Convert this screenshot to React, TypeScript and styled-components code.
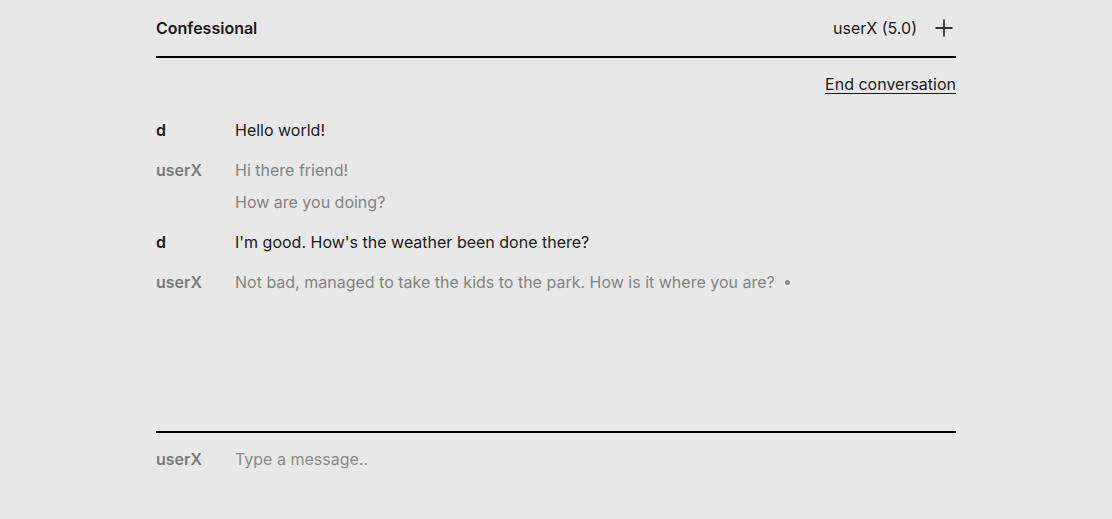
import styled, { createGlobalStyle } from "styled-components";

const GlobalStyle = createGlobalStyle`
  html, body {
    margin: 0;
    padding: 0;
    background: #e8e8e8;
    font-family: Inter, "Noto Sans", sans-serif;
    color: #1a1a1a;
  }
`;

const Page = styled.div`
  width: 800px;
  height: 100vh;
  margin: 0 auto;
  display: flex;
  flex-direction: column;
`;

const Header = styled.header`
  height: 56px;
  display: flex;
  align-items: center;
  justify-content: space-between;
  border-bottom: 2px solid #000;
  font-size: 16px;
`;

const Title = styled.div`
  font-weight: 600;
`;

const HeaderRight = styled.div`
  display: flex;
  align-items: center;
  gap: 15px;
`;

const IconButton = styled.button`
  border: 0;
  background: none;
  padding: 0;
  display: flex;
  color: #333;
  cursor: pointer;
`;

const Actions = styled.div`
  display: flex;
  justify-content: flex-end;
  padding-top: 14px;
`;

const EndLink = styled.a`
  font-size: 16px;
  line-height: 24px;
  color: #1a1a1a;
  text-decoration: underline;
  text-underline-offset: 3px;
  cursor: pointer;
`;

const Messages = styled.div`
  flex: 1;
  display: flex;
  flex-direction: column;
  gap: 16px;
  padding-top: 22px;
`;

const Group = styled.div`
  display: grid;
  grid-template-columns: 79px 1fr;
  row-gap: 8px;
  font-size: 16px;
  line-height: 24px;
`;

const Name = styled.div<{ $me?: boolean }>`
  font-weight: 600;
  color: ${(p) => (p.$me ? "#1a1a1a" : "#7a7a7a")};
`;

const Line = styled.div<{ $me?: boolean }>`
  grid-column: 2;
  color: ${(p) => (p.$me ? "#1a1a1a" : "#838383")};
  display: flex;
  align-items: center;
  gap: 10px;
`;

const Dot = styled.span`
  width: 5px;
  height: 5px;
  border-radius: 50%;
  background: #8a8a8a;
`;

const Composer = styled.div`
  border-top: 2px solid #000;
  display: grid;
  grid-template-columns: 79px 1fr;
  padding: 14px 0 48px;
  font-size: 16px;
  line-height: 24px;
`;

const Input = styled.input`
  border: 0;
  outline: none;
  background: none;
  padding: 0;
  font: inherit;
  color: #1a1a1a;
  &::placeholder {
    color: #8a8a8a;
  }
`;

const conversation = [
  { user: "d", me: true, lines: ["Hello world!"] },
  { user: "userX", me: false, lines: ["Hi there friend!", "How are you doing?"] },
  { user: "d", me: true, lines: ["I'm good. How's the weather been done there?"] },
  {
    user: "userX",
    me: false,
    lines: ["Not bad, managed to take the kids to the park. How is it where you are?"],
    typing: true,
  },
];

const PlusIcon = () => (
  <svg width="24" height="24" viewBox="0 0 24 24" fill="none">
    <path d="M12 3.5v17M3.5 12h17" stroke="currentColor" strokeWidth="1.8" />
  </svg>
);

const App = () => {
  return (
    <>
      <GlobalStyle />
      <Page>
        <Header>
          <Title>Confessional</Title>
          <HeaderRight>
            <span>userX (5.0)</span>
            <IconButton>
              <PlusIcon />
            </IconButton>
          </HeaderRight>
        </Header>
        <Actions>
          <EndLink>End conversation</EndLink>
        </Actions>
        <Messages>
          {conversation.map((g, i) => (
            <Group key={i}>
              <Name $me={g.me}>{g.user}</Name>
              {g.lines.map((l, j) => (
                <Line key={j} $me={g.me}>
                  {l}
                  {g.typing && j === g.lines.length - 1 && <Dot />}
                </Line>
              ))}
            </Group>
          ))}
        </Messages>
        <Composer>
          <Name>userX</Name>
          <Input placeholder="Type a message.." />
        </Composer>
      </Page>
    </>
  );
};

export default App;
